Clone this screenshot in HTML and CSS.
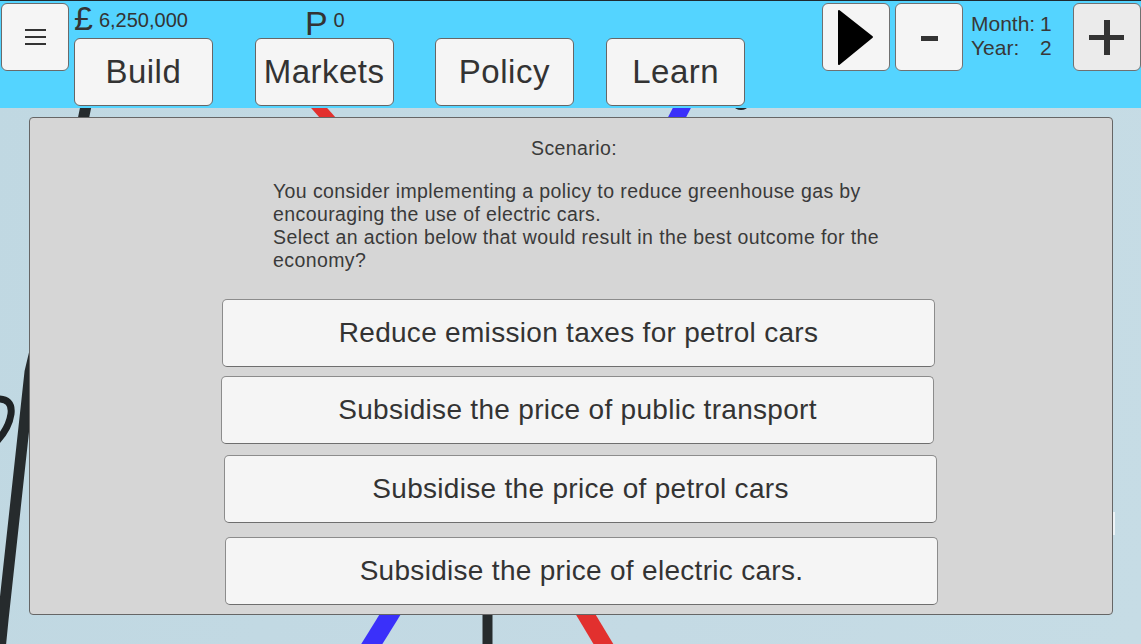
FILE: index.html
```html
<!DOCTYPE html>
<html lang="en">
<head>
<meta charset="utf-8">
<title>Policy scenario</title>
<link rel="stylesheet" href="styles.css">
</head>
<body>
<div class="app">
  <svg class="map" width="1141" height="644" viewBox="0 0 1141 644" aria-hidden="true">
    <polyline points="88,96 40,330 30,372 3,620 0,650" fill="none" stroke="#262b2d" stroke-width="11"/>
    <path d="M-4,399 Q13,398 11,414 Q9,428 -3,441" fill="none" stroke="#1f2325" stroke-width="7"/>
    <line x1="312" y1="100" x2="336" y2="127" stroke="#e2302e" stroke-width="12"/>
    <line x1="686" y1="100" x2="673" y2="125" stroke="#3a30fa" stroke-width="16"/>
    <ellipse cx="741" cy="106" rx="7" ry="4" fill="#232729"/>
    <line x1="396" y1="605" x2="365" y2="655" stroke="#3a30fa" stroke-width="18"/>
    <line x1="487.5" y1="605" x2="487.5" y2="650" stroke="#262b2d" stroke-width="10"/>
    <line x1="580" y1="605" x2="610" y2="655" stroke="#e2302e" stroke-width="17"/>
    <line x1="1114" y1="512" x2="1114" y2="535" stroke="#eef4f7" stroke-width="2"/>
  </svg>

  <header class="topbar">
    <button class="menu-btn" aria-label="Menu">
      <span class="menu-line"></span>
      <span class="menu-line"></span>
      <span class="menu-line"></span>
    </button>

    <div class="nav">
      <div class="stats">
        <span class="currency">£</span>
        <span class="money">6,250,000</span>
        <span class="points-symbol">P</span>
        <span class="points">0</span>
      </div>
      <div class="nav-buttons">
        <button class="nav-btn">Build</button>
        <button class="nav-btn nav-btn-markets">Markets</button>
        <button class="nav-btn nav-btn-policy">Policy</button>
        <button class="nav-btn nav-btn-learn">Learn</button>
      </div>
    </div>

    <div class="controls">
      <button class="ctrl-btn" aria-label="Play">
        <svg width="40" height="58" viewBox="0 0 40 58"><polygon points="3,3 36,29 3,56" fill="#000" stroke="#000" stroke-width="2" stroke-linejoin="round"/></svg>
      </button>
      <button class="ctrl-btn ctrl-minus" aria-label="Slower">
        <span class="minus-bar"></span>
      </button>
      <div class="date">
        <span class="date-label">Month:</span><span class="date-value">1</span>
        <span class="date-label">Year:</span><span class="date-value">2</span>
      </div>
      <button class="ctrl-btn ctrl-plus" aria-label="Faster">
        <span class="plus-h"></span>
        <span class="plus-v"></span>
      </button>
    </div>
  </header>

  <main class="stage">
    <section class="panel">
      <h2 class="panel-title">Scenario:</h2>
      <p class="scenario-text">You consider implementing a policy to reduce greenhouse gas by encouraging the use of electric cars.<br>Select an action below that would result in the best outcome for the economy?</p>
      <div class="options">
        <button class="option">Reduce emission taxes for petrol cars</button>
        <button class="option">Subsidise the price of public transport</button>
        <button class="option">Subsidise the price of petrol cars</button>
        <button class="option">Subsidise the price of electric cars.</button>
      </div>
    </section>
  </main>
</div>
</body>
</html>
```

FILE: styles.css
```css
* {
  box-sizing: border-box;
}

html, body {
  margin: 0;
  padding: 0;
}

body {
  width: 1141px;
  height: 644px;
  overflow: hidden;
  font-family: "Liberation Sans", Arial, sans-serif;
  color: #333;
}

.app {
  position: relative;
  width: 1141px;
  height: 644px;
  background: linear-gradient(100deg, #c0d8e2 0%, #c4dae4 60%, #c6dce5 100%);
}

.map {
  position: absolute;
  left: 0;
  top: 0;
}

button {
  font-family: inherit;
  color: #333;
  padding: 0;
  margin: 0;
}

/* ---------- top bar ---------- */
.topbar {
  position: relative;
  display: flex;
  align-items: flex-start;
  height: 108px;
  background: #54d4ff;
  border-top: 1px solid #1e2a30;
}

.menu-btn {
  width: 68px;
  height: 68px;
  margin: 2px 0 0 1px;
  background: #f5f5f5;
  border: 1px solid #6a6a6a;
  border-radius: 6px;
  display: flex;
  flex-direction: column;
  align-items: center;
  justify-content: center;
  gap: 5px;
}

.menu-line {
  display: block;
  width: 21px;
  height: 2px;
  background: #333;
}

.nav {
  width: 671px;
  margin-left: 5px;
}

.stats {
  display: flex;
  align-items: flex-start;
  height: 37px;
  color: #333;
}

.currency {
  font-size: 34px;
  line-height: 1;
  margin-top: 0;
}

.money {
  font-size: 20px;
  line-height: 1;
  margin: 9px 0 0 6px;
}

.points-symbol {
  font-size: 34px;
  line-height: 1;
  margin: 5px 0 0 117px;
}

.points {
  font-size: 20px;
  line-height: 1;
  margin: 9px 0 0 6px;
}

.nav-buttons {
  display: flex;
}

.nav-btn {
  width: 139px;
  height: 68px;
  background: #f5f5f5;
  border: 1px solid #666;
  border-radius: 6px;
  font-size: 33px;
  letter-spacing: 0.5px;
  color: #333;
}

.nav-btn-markets {
  margin-left: 42px;
}

.nav-btn-policy {
  margin-left: 41px;
  width: 140px;
}

.nav-btn-learn {
  margin-left: 32px;
}

.controls {
  display: flex;
  align-items: flex-start;
  margin-left: 77px;
}

.ctrl-btn {
  width: 68px;
  height: 68px;
  margin-top: 2px;
  background: #f5f5f5;
  border: 1px solid #707070;
  border-radius: 6px;
  display: flex;
  align-items: center;
  justify-content: center;
  position: relative;
}

.ctrl-minus {
  margin-left: 5px;
}

.minus-bar {
  display: block;
  width: 17px;
  height: 5px;
  background: #333;
  margin-top: 2px;
}

.date {
  width: 102px;
  margin: 11px 0 0 8px;
  display: grid;
  grid-template-columns: 69px auto;
  font-size: 21px;
  line-height: 24px;
  color: #383838;
}

.ctrl-plus {
  background: #ebebeb;
}

.plus-h {
  position: absolute;
  left: 15px;
  top: 31px;
  width: 35px;
  height: 5px;
  background: #333;
}

.plus-v {
  position: absolute;
  left: 30px;
  top: 16px;
  width: 6px;
  height: 35px;
  background: #333;
}

/* ---------- panel ---------- */
.stage {
  position: relative;
  padding: 9px 0 0 29px;
}

.panel {
  width: 1084px;
  height: 498px;
  background: #d6d6d6;
  border: 1px solid #666;
  border-radius: 4px;
  padding-top: 19px;
  display: flex;
  flex-direction: column;
  align-items: flex-start;
}

.panel-title {
  margin: 0;
  width: 100%;
  text-align: center;
  padding-left: 6px;
  font-weight: normal;
  font-size: 19.5px;
  letter-spacing: 0.4px;
  line-height: 23.4px;
  color: #3a3a3a;
}

.scenario-text {
  margin: 20px 0 0 243px;
  width: 630px;
  font-size: 19.5px;
  letter-spacing: 0.4px;
  line-height: 22.7px;
  color: #3a3a3a;
}

.options {
  display: flex;
  flex-direction: column;
  margin: 28px 0 0 192px;
}

.option {
  width: 713px;
  height: 68px;
  background: #f5f5f5;
  border: 1px solid #8c8c8c;
  border-bottom-color: #6e6e6e;
  border-radius: 5px;
  font-size: 28px;
  letter-spacing: 0.3px;
  color: #333;
}

.option:nth-child(2) {
  margin-top: 9px;
  margin-left: -1px;
}

.option:nth-child(3) {
  margin-top: 11px;
  margin-left: 2px;
}

.option:nth-child(4) {
  margin-top: 14px;
  margin-left: 3px;
}
```
